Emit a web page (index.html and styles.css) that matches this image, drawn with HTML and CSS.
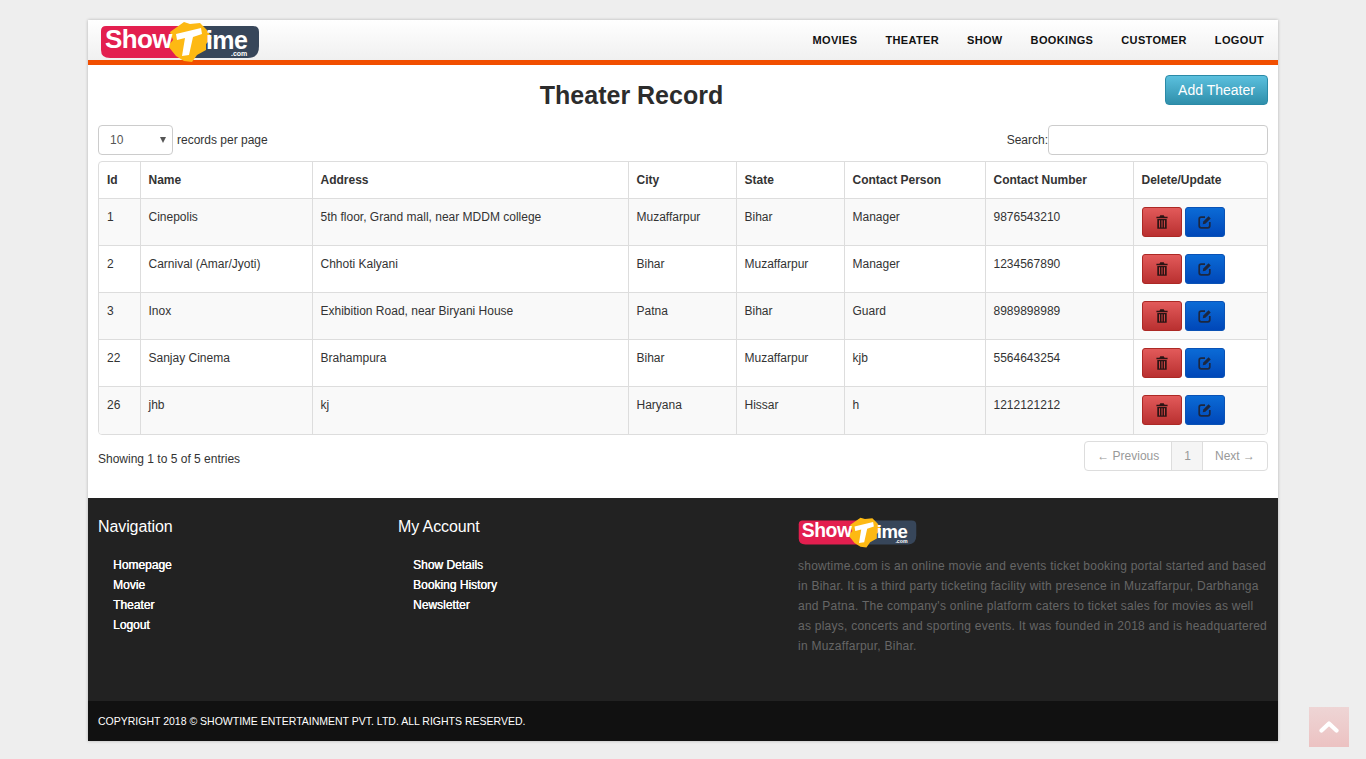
FILE: index.html
```html
<!DOCTYPE html>
<html lang="en">
<head>
<meta charset="utf-8">
<title>Theater Record</title>
<link rel="stylesheet" href="styles.css">
</head>
<body>
<svg class="defs" width="0" height="0" aria-hidden="true">
  <defs>
    <symbol id="logo" viewBox="0 0 160 44">
      <path d="M6 6H80V38H10Q1 38 1 30V11Q1 6 6 6Z" fill="#e31f4f"/>
      <path d="M80 6H153Q159 6 159 12V26Q159 38 148 38H80Z" fill="#37465a"/>
      <path d="M70 12L84 2L90 4L100 3L107 10L112 18L106 24L106 30L97 35L92 42L84 41L76 36L68 26L73 20Z" fill="#fdb913"/>
      <path d="M76 14L101 8L102 14L93 17L89 35L82 36L85 18L77 20Z" fill="#fff"/>
      <text x="5" y="28" class="logo-show">Show</text>
      <text x="106" y="29" class="logo-ime">ime</text>
      <text x="131" y="36" class="logo-com">.com</text>
    </symbol>
    <symbol id="trash" viewBox="0 0 14 16">
      <path d="M5 0H9L10 2H13.5V3.5H.5V2H4ZM1.5 4.5H12.5V16H1.5ZM3.5 6V14.5H4.7V6ZM6.4 6V14.5H7.6V6ZM9.3 6V14.5H10.5V6Z" fill-rule="evenodd"/>
    </symbol>
    <symbol id="edit" viewBox="0 0 14 14">
      <path d="M7 2.2H3.2Q1.2 2.2 1.2 4.2V10.8Q1.2 12.8 3.2 12.8H9.8Q11.8 12.8 11.8 10.8V7" fill="none" stroke="currentColor" stroke-width="1.7"/>
      <path d="M4.8 9.2L5.3 6.6L10.6 1.3L12.7 3.4L7.4 8.7Z"/>
    </symbol>
  </defs>
</svg>
<div class="page">
  <header class="topbar">
    <a class="brand" href="#"><svg class="logo-lg"><use href="#logo"/></svg></a>
    <nav class="mainnav">
      <a href="#">MOVIES</a><a href="#">THEATER</a><a href="#">SHOW</a><a href="#">BOOKINGS</a><a href="#">CUSTOMER</a><a href="#">LOGOUT</a>
    </nav>
  </header>
  <main class="content">
    <div class="titlebar">
      <h2>Theater Record</h2>
      <a class="btn-add" href="#">Add Theater</a>
    </div>
    <div class="tools">
      <label class="length"><span class="select"><span>10</span><i class="caret"></i></span> records per page</label>
      <label class="search">Search:<span class="search-input"></span></label>
    </div>
    <div class="table-wrap">
      <table>
        <colgroup>
          <col class="c1"><col class="c2"><col class="c3"><col class="c4"><col class="c5"><col class="c6"><col class="c7"><col class="c8">
        </colgroup>
        <thead>
          <tr><th>Id</th><th>Name</th><th>Address</th><th>City</th><th>State</th><th>Contact Person</th><th>Contact Number</th><th>Delete/Update</th></tr>
        </thead>
        <tbody>
          <tr><td>1</td><td>Cinepolis</td><td>5th floor, Grand mall, near MDDM college</td><td>Muzaffarpur</td><td>Bihar</td><td>Manager</td><td>9876543210</td>
            <td><div class="actions"><a class="act del" href="#"><svg class="ic-trash"><use href="#trash"/></svg></a><a class="act upd" href="#"><svg class="ic-edit"><use href="#edit"/></svg></a></div></td></tr>
          <tr><td>2</td><td>Carnival (Amar/Jyoti)</td><td>Chhoti Kalyani</td><td>Bihar</td><td>Muzaffarpur</td><td>Manager</td><td>1234567890</td>
            <td><div class="actions"><a class="act del" href="#"><svg class="ic-trash"><use href="#trash"/></svg></a><a class="act upd" href="#"><svg class="ic-edit"><use href="#edit"/></svg></a></div></td></tr>
          <tr><td>3</td><td>Inox</td><td>Exhibition Road, near Biryani House</td><td>Patna</td><td>Bihar</td><td>Guard</td><td>8989898989</td>
            <td><div class="actions"><a class="act del" href="#"><svg class="ic-trash"><use href="#trash"/></svg></a><a class="act upd" href="#"><svg class="ic-edit"><use href="#edit"/></svg></a></div></td></tr>
          <tr><td>22</td><td>Sanjay Cinema</td><td>Brahampura</td><td>Bihar</td><td>Muzaffarpur</td><td>kjb</td><td>5564643254</td>
            <td><div class="actions"><a class="act del" href="#"><svg class="ic-trash"><use href="#trash"/></svg></a><a class="act upd" href="#"><svg class="ic-edit"><use href="#edit"/></svg></a></div></td></tr>
          <tr><td>26</td><td>jhb</td><td>kj</td><td>Haryana</td><td>Hissar</td><td>h</td><td>1212121212</td>
            <td><div class="actions"><a class="act del" href="#"><svg class="ic-trash"><use href="#trash"/></svg></a><a class="act upd" href="#"><svg class="ic-edit"><use href="#edit"/></svg></a></div></td></tr>
        </tbody>
      </table>
    </div>
    <div class="tablefoot">
      <div class="info">Showing 1 to 5 of 5 entries</div>
      <ul class="pager">
        <li><a href="#">← Previous</a></li><li class="on"><a href="#">1</a></li><li><a href="#">Next →</a></li>
      </ul>
    </div>
  </main>
  <footer class="foot">
    <div class="foot-cols">
      <section>
        <h3>Navigation</h3>
        <ul><li><a href="#">Homepage</a></li><li><a href="#">Movie</a></li><li><a href="#">Theater</a></li><li><a href="#">Logout</a></li></ul>
      </section>
      <section>
        <h3>My Account</h3>
        <ul><li><a href="#">Show Details</a></li><li><a href="#">Booking History</a></li><li><a href="#">Newsletter</a></li></ul>
      </section>
      <section class="about">
        <svg class="logo-sm"><use href="#logo"/></svg>
        <p>showtime.com is an online movie and events ticket booking portal started and based in Bihar. It is a third party ticketing facility with presence in Muzaffarpur, Darbhanga and Patna. The company's online platform caters to ticket sales for movies as well as plays, concerts and sporting events. It was founded in 2018 and is headquartered in Muzaffarpur, Bihar.</p>
      </section>
    </div>
    <div class="copy">COPYRIGHT 2018 © SHOWTIME ENTERTAINMENT PVT. LTD. ALL RIGHTS RESERVED.</div>
  </footer>
</div>
<a class="totop" href="#"><svg width="20" height="12" viewBox="0 0 20 12"><path d="M2.5 9.5L10 2.5L17.5 9.5" fill="none" stroke="#fff" stroke-width="4.2" stroke-linecap="round" stroke-linejoin="round"/></svg></a>
</body>
</html>
```
FILE: styles.css
```css
* { box-sizing: border-box; }
html, body { height: 100%; }
body {
  margin: 0;
  background: #eee;
  color: #333;
  font: 12px/20px "Liberation Sans", Arial, sans-serif;
  overflow: hidden;
}
a { color: inherit; text-decoration: none; }
ul { list-style: none; margin: 0; padding: 0; }
.defs { position: absolute; }

.page {
  width: 1190px;
  margin: 20px auto 0;
  background: #fff;
  box-shadow: 0 0 3px rgba(0, 0, 0, .25);
}

.topbar {
  height: 45px;
  display: flex;
  justify-content: space-between;
  align-items: flex-start;
  padding: 0 14px 0 12px;
  background: linear-gradient(#fff, #f0f0f0);
  border-bottom: 5px solid #f14e00;
}
.brand { display: block; height: 44px; }
.logo-lg { display: block; width: 160px; height: 44px; }
.logo-show { font: 900 26px "Liberation Sans", sans-serif; fill: #fff; letter-spacing: -.6px; }
.logo-ime { font: 900 25px "Liberation Sans", sans-serif; fill: #fff; letter-spacing: -.6px; }
.logo-com { font: 700 7px "Liberation Sans", sans-serif; fill: #fff; }
.mainnav { display: flex; gap: 28px; height: 40px; align-items: center; }
.mainnav a { color: #111; font-size: 11px; font-weight: 700; letter-spacing: .35px; }

.content { padding: 10px 10px 27px; }
.titlebar { display: flex; align-items: flex-start; height: 50px; }
.titlebar h2 {
  flex: 1;
  margin: 0;
  padding-top: 5px;
  text-align: center;
  color: #2c2c2c;
  font-size: 25px;
  line-height: 30px;
  font-weight: 700;
}
.btn-add {
  width: 103px;
  height: 30px;
  border: 1px solid #2b8aa7;
  border-radius: 4px;
  background: linear-gradient(#5bc0de, #2f8fab);
  color: #fff;
  font-size: 14px;
  line-height: 28px;
  text-align: center;
}

.tools { display: flex; justify-content: space-between; height: 30px; margin-bottom: 6px; }
.length, .search { display: flex; align-items: center; }
.length { gap: 4px; }
.select {
  width: 75px;
  height: 30px;
  padding: 0 6px 0 11px;
  display: flex;
  justify-content: space-between;
  align-items: center;
  border: 1px solid #ccc;
  border-radius: 4px;
  color: #555;
}
.caret { border: 3.5px solid transparent; border-top: 6px solid #555; border-bottom: 0; }
.search-input {
  display: block;
  width: 220px;
  height: 30px;
  border: 1px solid #ccc;
  border-radius: 4px;
}

.table-wrap { border: 1px solid #ddd; border-radius: 4px; overflow: hidden; }
table { width: 1168px; border-collapse: collapse; table-layout: fixed; }
.c1 { width: 41px; } .c2 { width: 172px; } .c3 { width: 316px; } .c4 { width: 108px; }
.c5 { width: 108px; } .c6 { width: 141px; } .c7 { width: 148px; } .c8 { width: 134px; }
th, td {
  padding: 8px;
  border-left: 1px solid #ddd;
  border-top: 1px solid #ddd;
  text-align: left;
  vertical-align: top;
  color: #333;
}
th:first-child, td:first-child { border-left: 0; }
thead tr:first-child th { border-top: 0; }
th { height: 36px; font-weight: 700; border-bottom: 1px solid #ddd; }
thead + tbody tr:first-child td { border-top: 0; }
td { height: 47px; }
tbody tr:nth-child(odd) { background: #f9f9f9; }
.actions { display: flex; gap: 3px; }
.act {
  width: 40px;
  height: 30px;
  display: flex;
  align-items: center;
  justify-content: center;
  border-radius: 3px;
}
.del { background: linear-gradient(#e25a5a, #b93030); border: 1px solid #ac2925; color: #222; fill: #2b1414; }
.upd { background: linear-gradient(#0b6bd6, #0047b8); border: 1px solid #0a52b5; color: #1c2740; fill: #1c2740; }
.ic-trash { width: 12px; height: 14px; }
.ic-edit { width: 14px; height: 14px; }

.tablefoot { display: flex; justify-content: space-between; margin-top: 6px; }
.info { padding-top: 8px; }
.pager {
  display: flex;
  height: 30px;
  border: 1px solid #ddd;
  border-radius: 4px;
  color: #999;
  line-height: 28px;
}
.pager li + li { border-left: 1px solid #ddd; }
.pager a { display: block; padding: 0 12px; }
.pager .on { background: #f5f5f5; }
.pager .on a { padding: 0 11px 0 12px; }

.foot { background: #222; }
.foot-cols {
  height: 203px;
  padding: 19px 10px 0;
  display: grid;
  grid-template-columns: 300px 400px 470px;
}
.foot h3 {
  margin: 0 0 18px;
  color: #fff;
  font-size: 16px;
  line-height: 20px;
  font-weight: 400;
  letter-spacing: -.1px;
}
.foot ul { padding-left: 15px; color: #fff; }
.foot li { height: 20px; }
.foot li a { font-weight: 400; text-shadow: .3px 0 0 #fff; }
.about { margin-top: -1px; }
.logo-sm { display: block; width: 119px; height: 33px; }
.about p { margin: 7px 0 0; color: #666; line-height: 20px; letter-spacing: .25px; }
.copy {
  height: 40px;
  padding: 0 10px;
  background: #111;
  color: #fff;
  font-size: 10.5px;
  line-height: 40px;
}

.totop {
  position: fixed;
  left: 1309px;
  top: 707px;
  width: 40px;
  height: 40px;
  display: flex;
  align-items: center;
  justify-content: center;
  background: linear-gradient(#eed5d5, #ecc2c2);
}
```
